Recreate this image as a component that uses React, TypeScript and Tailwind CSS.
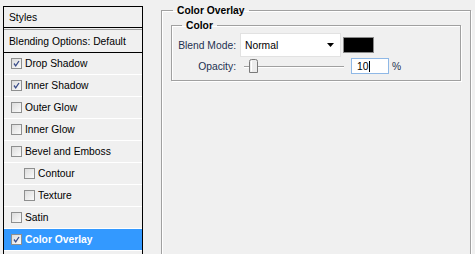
import React from "react";

type Item = {
	name: string;
	checked?: boolean;
	indent?: boolean;
	active?: boolean;
};

const items: Item[] = [
	{ name: "Drop Shadow", checked: true },
	{ name: "Inner Shadow", checked: true },
	{ name: "Outer Glow" },
	{ name: "Inner Glow" },
	{ name: "Bevel and Emboss" },
	{ name: "Contour", indent: true },
	{ name: "Texture", indent: true },
	{ name: "Satin" },
	{ name: "Color Overlay", checked: true, active: true },
];

const CheckBox: React.FC<{ checked?: boolean }> = ({ checked }) => (
	<span className="flex h-[11px] w-[11px] shrink-0 items-center justify-center border border-[#8e8f8f] bg-gradient-to-br from-[#dcdcdc] to-[#fbfbfb]">
		{checked && (
			<svg width="9" height="9" viewBox="0 0 9 9">
				<path d="M2 4.5 L3.7 6.8 L7 2" fill="none" stroke="#3a4d8a" strokeWidth="1.3" />
			</svg>
		)}
	</span>
);

const StyleRow: React.FC<{ item: Item }> = ({ item }) => (
	<div
		className={`flex h-[22px] items-center gap-[3px] border-b border-white ${
			item.indent ? "pl-[20px]" : "pl-[7px]"
		} ${item.active ? "bg-[#3399ff] font-bold text-white" : "text-black"}`}
	>
		<CheckBox checked={item.checked} />
		<span>{item.name}</span>
	</div>
);

const Slider: React.FC = () => (
	<svg width="100" height="16" viewBox="0 0 100 16" className="ml-[8px] shrink-0">
		<line x1="0" y1="8.5" x2="100" y2="8.5" stroke="#a0a0a0" />
		<line x1="0" y1="9.5" x2="100" y2="9.5" stroke="#ffffff" />
		<path
			d="M5.5 14.5 V3.5 Q5.5 1.5 7.5 1.5 H11.5 Q13.5 1.5 13.5 3.5 V14.5 Z"
			fill="#ececec"
			stroke="#7a7a7a"
		/>
		<line x1="7.5" y1="3" x2="7.5" y2="13.5" stroke="#ffffff" />
	</svg>
);

export default function App() {
	return (
		<div className="flex h-[254px] w-[475px] overflow-hidden bg-[#f0f0f0] font-['Liberation_Sans',sans-serif] text-[10.3px] leading-[13px]">
			<div className="ml-[3px] mt-[6px] h-[260px] w-[140px] shrink-0 border-x border-t border-black">
				<div className="flex h-[21px] items-center border-b border-black pl-[5px] text-black">Styles</div>
				<div className="mt-px flex h-[24px] items-center border-y border-b-black border-t-[#a0a0a0] pl-[5px] text-black">
					Blending Options: Default
				</div>
				{items.map((item) => (
					<StyleRow key={item.name} item={item} />
				))}
			</div>

			<fieldset className="ml-[18px] mt-[4px] h-[270px] w-[310px] shrink-0 border border-[#a0a0a0] shadow-[inset_1px_1px_0_#fff,1px_1px_0_#fff]">
				<legend className="ml-[11px] px-[4px] font-bold text-black">Color Overlay</legend>
				<fieldset className="mx-[9px] mt-[2px] border border-[#a0a0a0] pb-[6px] shadow-[inset_1px_1px_0_#fff,1px_1px_0_#fff]">
					<legend className="ml-[10px] px-[4px] font-bold text-black">Color</legend>
					<div className="mt-px flex h-[24px] items-center">
						<span className="w-[64px] text-right text-[#1e3050]">Blend Mode:</span>
						<div className="ml-[4px] flex h-[24px] w-[101px] items-center justify-between border border-[#e2e2e2] bg-white pl-[4px] pr-[6px] text-black">
							<span>Normal</span>
							<svg width="7" height="4" viewBox="0 0 7 4">
								<path d="M0 0 H7 L3.5 4 Z" fill="#000" />
							</svg>
						</div>
						<div className="ml-[2px] h-[16px] w-[31px] border border-[#8a8a8a] bg-black" />
					</div>
					<div className="mt-px flex h-[16px] items-center">
						<span className="w-[64px] text-right text-[#1e3050]">Opacity:</span>
						<Slider />
						<div className="ml-[7px] flex h-[16px] w-[38px] items-center border border-[#8fb8e6] bg-white pl-[5px] text-black">
							<span>10</span>
							<span className="ml-px h-[11px] w-px bg-black" />
						</div>
						<span className="ml-[3px] text-[#1e3050]">%</span>
					</div>
				</fieldset>
			</fieldset>
		</div>
	);
}
